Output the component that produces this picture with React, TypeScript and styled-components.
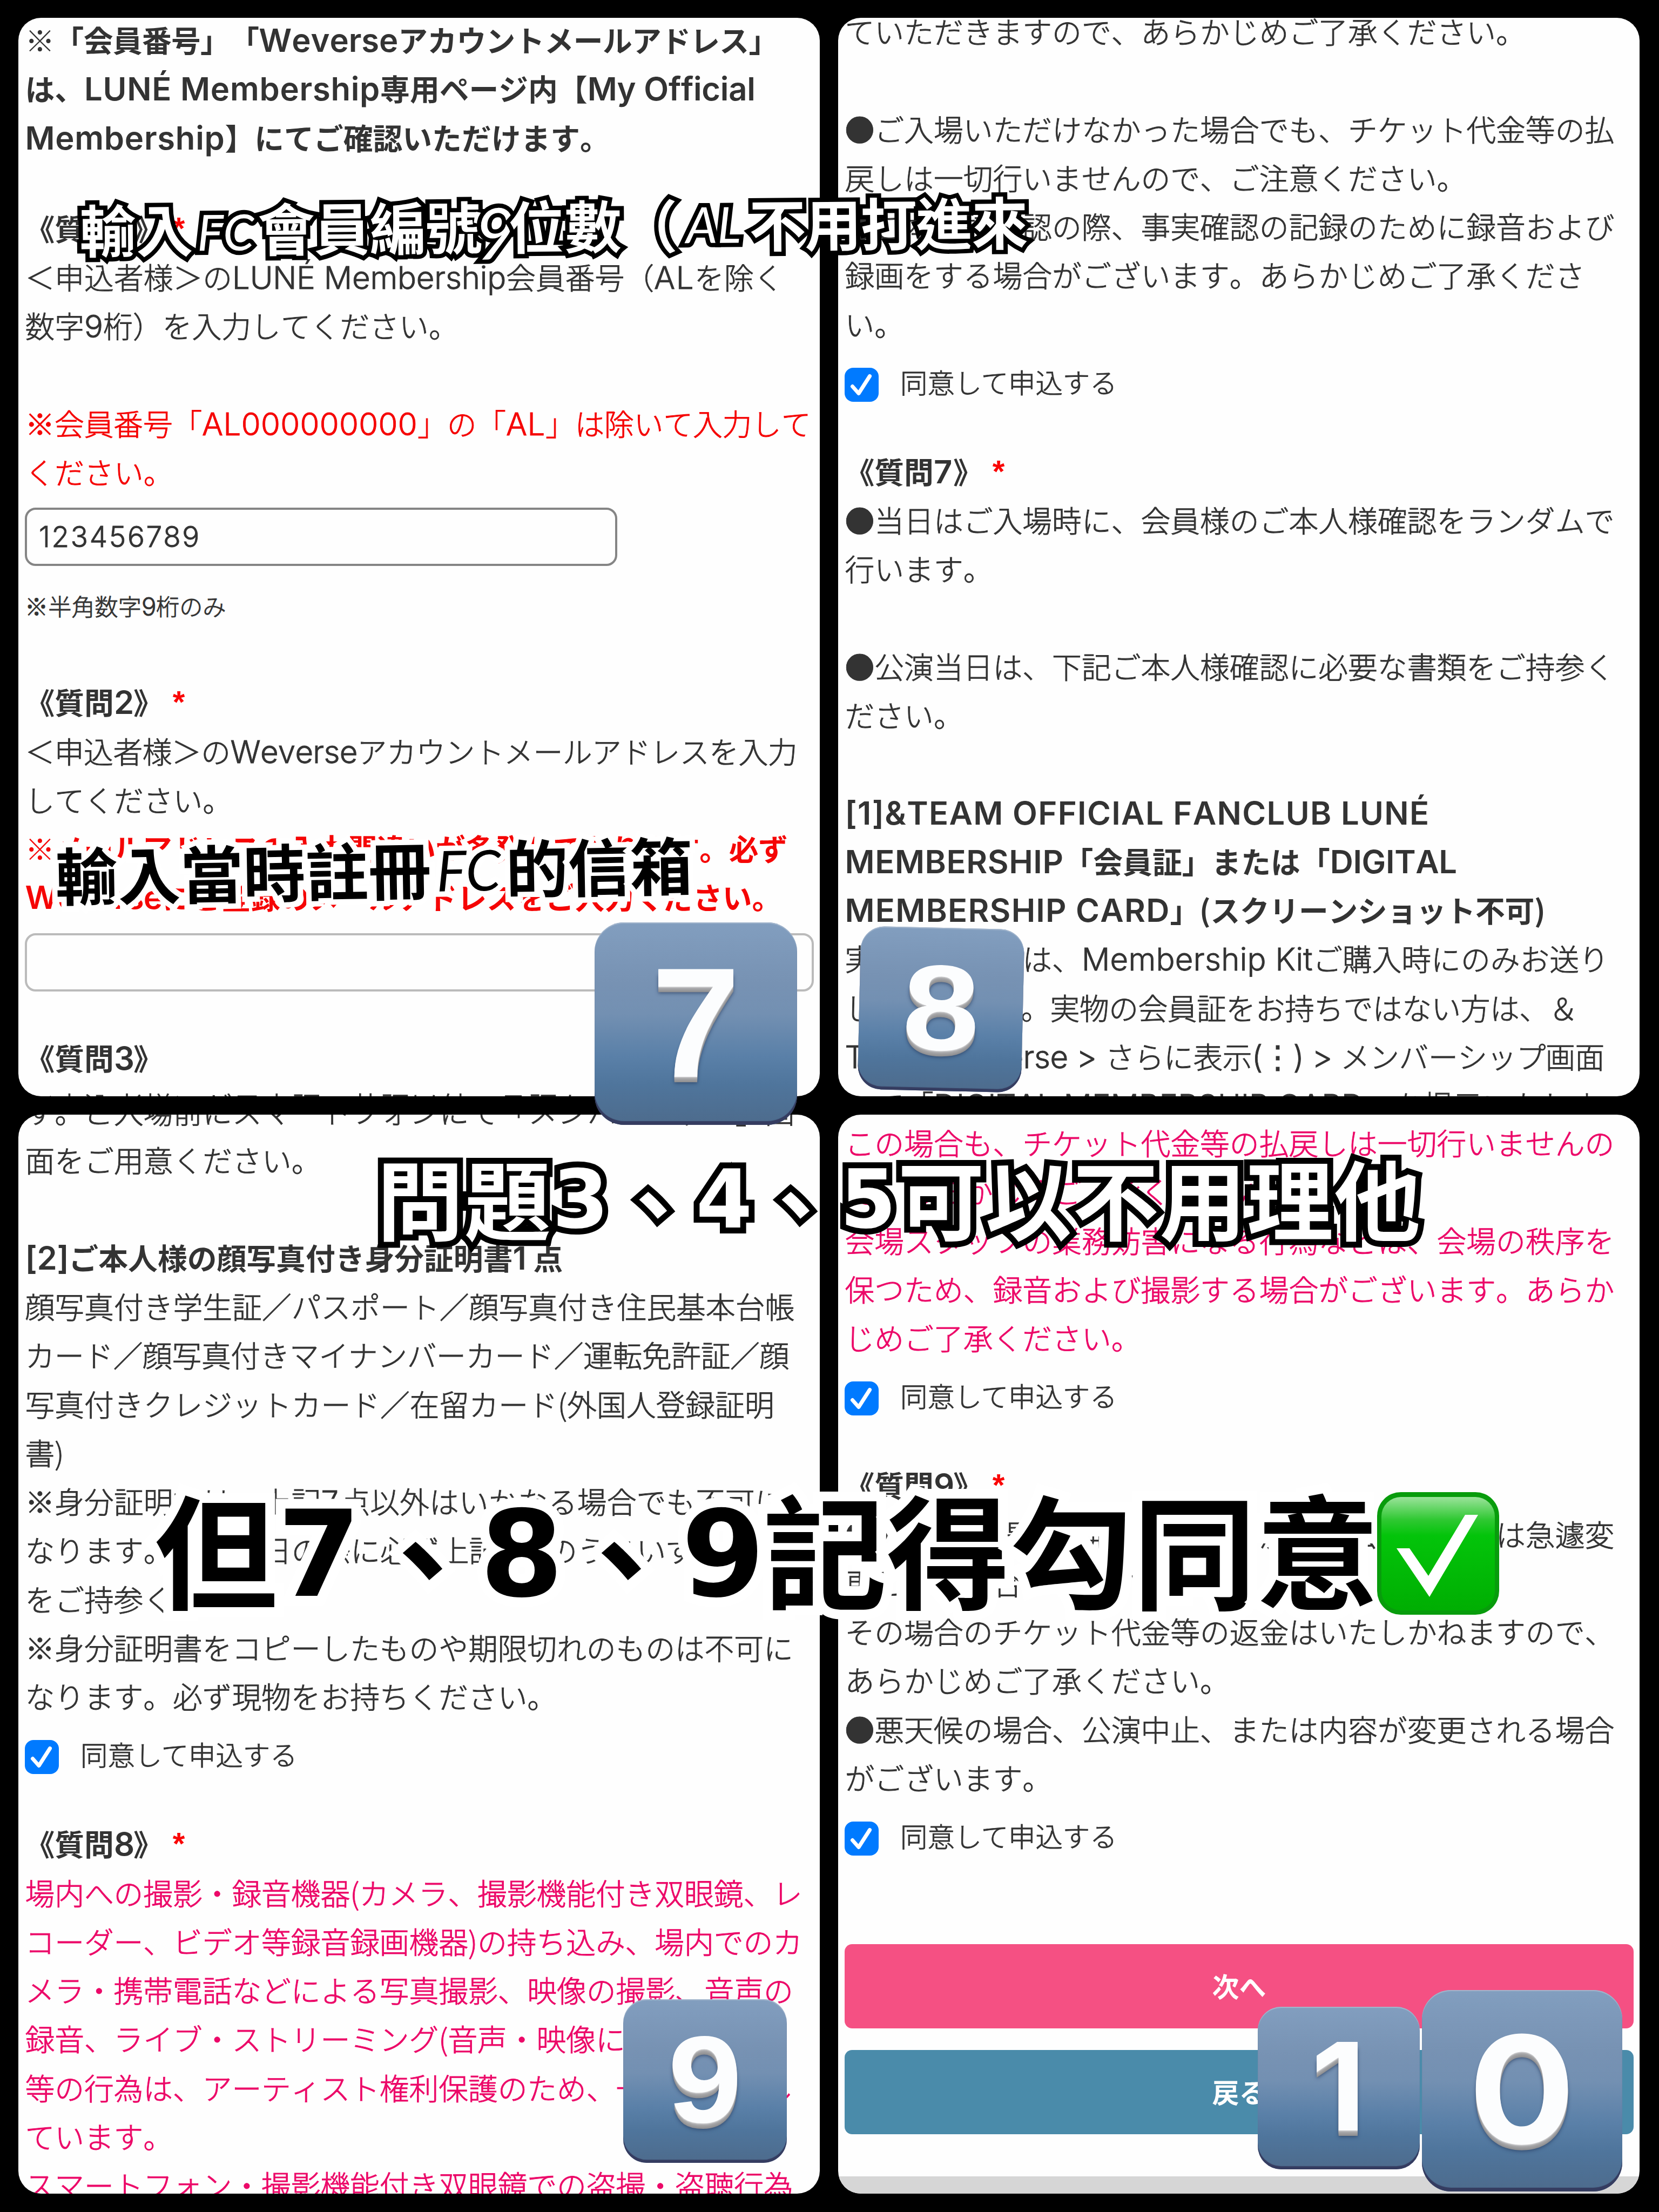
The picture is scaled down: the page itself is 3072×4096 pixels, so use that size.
import React, { useLayoutEffect, useRef } from 'react';
import styled, { createGlobalStyle, css } from 'styled-components';

const JP = `"Noto Sans CJK JP", "Noto Sans", sans-serif`;
const TC = `"Noto Sans CJK TC", "Noto Sans CJK JP", sans-serif`;
const ROW = 90.25;

const GlobalStyle = createGlobalStyle`
  body { margin: 0; background: #000; }
  * { box-sizing: border-box; }
`;

const Board = styled.main`
  position: relative;
  width: 3072px;
  height: 4096px;
  overflow: hidden;
  background: #000;
  display: grid;
  grid-template-columns: 1484px 1484px;
  grid-template-rows: 1997px 1998px;
  gap: 34px;
  padding: 33px 34px;
  font-family: ${JP};
  color: #333;
`;

const Panel = styled.section`
  background: #fefefe;
  border-radius: 42px;
  overflow: hidden;
`;

const Flow = styled.div<{ $shift: number }>`
  display: flex;
  flex-direction: column;
  margin-top: ${(p) => p.$shift}px;
  padding: 0 12px 0 13px;
`;

type Tone = 'ink' | 'red' | 'pink';
const tones: Record<Tone, string> = { ink: '#333', red: '#f50505', pink: '#ec0868' };

const thin = css`
  font-weight: 300;
  -webkit-text-stroke: 0.9px currentColor;
`;

const Line = styled.p<{ $bold?: boolean; $tone?: Tone; $gap?: number; $track?: number }>`
  margin: ${(p) => p.$gap ?? 0}px 0 0 -0.5px;
  height: ${ROW}px;
  line-height: ${ROW - 8}px;
  font-size: 54.8px;
  ${(p) => (p.$bold ? css`font-weight: 700;` : thin)}
  color: ${(p) => tones[p.$tone ?? 'ink']};
  letter-spacing: ${(p) => p.$track ?? 0}px;
  white-space: pre;
  text-spacing-trim: space-all;
  font-kerning: none;
  flex: none;
`;

const Blank = styled.div<{ $h?: number }>`
  height: ${(p) => p.$h ?? ROW}px;
  flex: none;
`;

const Latin = styled.span<{ $bold?: boolean }>`
  font-family: Inter, ${JP};
  font-size: 1.06em;
  line-height: 1;
  white-space: pre;
  ${(p) => p.$bold && css`font-weight: 600; font-size: 1.09em;`}
`;

const Star = styled.span`
  position: relative;
  top: -2px;
  margin-left: 18px;
  font-family: "Liberation Sans", sans-serif;
  font-size: 58px;
  line-height: 1;
  font-weight: 700;
  color: #fa0505;
`;

const Field = styled.div<{ $w: number; $h: number; $gap: number; $edge: string }>`
  margin-top: ${(p) => p.$gap}px;
  width: ${(p) => p.$w}px;
  height: ${(p) => p.$h}px;
  margin-left: -1px;
  padding-left: 22px;
  border: 4px solid ${(p) => p.$edge};
  border-radius: 20px;
  display: flex;
  align-items: center;
  font-size: 50px;
  ${thin}
  flex: none;
`;

const Hint = styled.p`
  margin: 29px 0 0 -1px;
  height: 90px;
  line-height: 88px;
  font-size: 43.2px;
  ${thin}
  white-space: pre;
`;

const AgreeRow = styled.label`
  display: flex;
  align-items: center;
  gap: 40px;
  height: 63px;
  margin: 34px 0 0 -1px;
  font-size: 50.4px;
  line-height: 63px;
  ${thin}
  white-space: nowrap;
  flex: none;
`;

const AgreeText = styled.span`
  margin-top: -12px;
`;

const Box = styled.span`
  width: 63px;
  height: 63px;
  border-radius: 16px;
  background: #007aff;
  display: flex;
  align-items: center;
  justify-content: center;
`;

const Actions = styled.div`
  display: flex;
  flex-direction: column;
  gap: 40px;
  margin: 164px -1px 0;
`;

const Action = styled.button<{ $bg: string }>`
  height: 156px;
  border: 0;
  border-radius: 14px;
  padding: 0 0 4px;
  background: ${(p) => p.$bg};
  color: #fff;
  font-family: ${JP};
  font-size: 50px;
  font-weight: 700;
`;

const Footer = styled.div`
  height: 60px;
  margin-top: 78px;
  background: #d6d6d6;
`;

/* Handwritten notes and keycaps float freely over the collage. */
const Caption = styled.div<{ $x: number; $y: number; $size: number; $tilt?: number; $ink: string; $edge: string; $stroke: number }>`
  position: absolute;
  left: ${(p) => p.$x}px;
  top: ${(p) => p.$y}px;
  display: flex;
  align-items: center;
  height: ${(p) => p.$size * 1.4}px;
  line-height: ${(p) => p.$size * 1.4}px;
  transform: translateY(-50%) rotate(${(p) => p.$tilt ?? 0}deg);
  font-family: ${TC};
  font-size: ${(p) => p.$size}px;
  font-weight: 700;
  white-space: nowrap;
  color: ${(p) => p.$ink};
  -webkit-text-stroke: ${(p) => p.$stroke}px ${(p) => p.$edge};
  paint-order: stroke fill;
  stroke-linejoin: round;
`;

const Glyph = styled.span<{ $w: number; $kind?: 'hand' | 'chunky'; $size?: number; $drop?: number }>`
  width: ${(p) => p.$w}px;
  flex: none;
  display: flex;
  justify-content: center;
  position: relative;
  top: ${(p) => p.$drop ?? 0}px;
  ${(p) => p.$size && css`font-size: ${p.$size}px;`}
  ${(p) => p.$kind === 'hand' && css`font-family: Lato, ${TC}; font-style: italic; font-weight: 400;`}
  ${(p) => p.$kind === 'chunky' && css`font-family: "DejaVu Sans", ${TC};`}
`;

const Key = styled.div<{ $x: number; $y: number; $w: number; $h: number; $tilt?: number }>`
  position: absolute;
  left: ${(p) => p.$x}px;
  top: ${(p) => p.$y}px;
  width: ${(p) => p.$w}px;
  height: ${(p) => p.$h}px;
  padding-bottom: 6px;
  border-radius: ${(p) => p.$w * 0.145}px;
  transform: rotate(${(p) => p.$tilt ?? 0}deg);
  display: flex;
  align-items: center;
  justify-content: center;
  background: linear-gradient(180deg, #829ebf 0%, #7792b3 30%, #7390b2 45%, #5a80a8 66%, #4f759c 80%, #4d6b8c 100%);
  box-shadow: inset 0 ${(p) => p.$w * -0.019}px 1px #353c60, inset 0 2px 1px #a3b6cd;
`;

const KeyDigit = styled.span<{ $size: number; $face?: 'inter' | 'grotesk'; $stretch?: number }>`
  font-family: ${(p) => (p.$face === 'inter' ? 'Inter, ' : '')}"Liberation Sans", Arial, sans-serif;
  font-weight: 700;
  font-size: ${(p) => p.$size}px;
  line-height: 1;
  color: #fcfdfe;
  transform: scaleX(${(p) => p.$stretch ?? 1.08});
  text-shadow: 0 2px 0 #c4c4c6, 0 4px 0 #a9a9ab, 0 6px 0 #a0a0a2, 0 8px 0 #98989a, 0 10px 0 #919193, 0 12px 6px rgba(40, 60, 95, 0.7);
`;

const CheckEmoji = styled.svg`
  position: absolute;
  left: 2549px;
  top: 2762px;
  width: 228px;
  height: 229px;
`;

/* Latin run tracked so that it fills exactly `w` pixels. */
function Fit({ w, bold, children }: { w: number; bold?: boolean; children: string }) {
  const ref = useRef<HTMLSpanElement>(null);
  useLayoutEffect(() => {
    const el = ref.current;
    if (!el) return;
    el.style.letterSpacing = '0px';
    const natural = el.getBoundingClientRect().width;
    el.style.letterSpacing = `${(w - natural) / children.length}px`;
  }, [w, children]);
  return <Latin ref={ref} $bold={bold}>{children}</Latin>;
}

function Question({ n, gap, required = true }: { n: string; gap: number; required?: boolean }) {
  return (
    <Line $bold $gap={gap}>
      《質問<Fit bold w={36}>{n}</Fit>》{required && <Star>*</Star>}
    </Line>
  );
}

function Agree() {
  return (
    <AgreeRow>
      <Box>
        <svg width="45" height="45" viewBox="0 0 45 45" fill="none">
          <path d="M5.5 25.5 L17 38.5 L37.5 6.5" stroke="#fff" strokeWidth="7" strokeLinecap="round" strokeLinejoin="round" />
        </svg>
      </Box>
      <AgreeText>同意して申込する</AgreeText>
    </AgreeRow>
  );
}

function Lines({ rows, tone, track }: { rows: string[]; tone?: Tone; track?: number }) {
  return (
    <>
      {rows.map((r) => (
        <Line key={r} $tone={tone} $track={track}>{r}</Line>
      ))}
    </>
  );
}

function Run({ text, w }: { text: string; w: number }) {
  return (
    <>
      {Array.from(text).map((c, i) => (
        <Glyph key={i} $w={w}>{c}</Glyph>
      ))}
    </>
  );
}

export default function App() {
  return (
    <Board>
      <GlobalStyle />

      <Panel>
        <Flow $shift={-2}>
          <Line $bold $track={-0.7}>※「会員番号」「<Fit bold w={258}>Weverse</Fit>アカウントメールアドレス」</Line>
          <Line $bold>は、<Fit bold w={548}>LUNÉ Membership</Fit>専用ページ内【<Fit bold w={311}>My Official</Fit></Line>
          <Line $bold><Fit bold w={370}>Membership</Fit>】にてご確認いただけます。</Line>
          <Question n="1" gap={78} />
          <Line>＜申込者様＞の<Fit w={507}>LUNÉ Membership</Fit>会員番号（<Fit w={75}>AL</Fit>を除く</Line>
          <Line>数字<Fit w={35}>9</Fit>桁）を入力してください。</Line>
          <Blank />
          <Line $tone="red" $track={-0.2}>※会員番号「<Fit w={399}>AL000000000</Fit>」の「<Fit w={73}>AL</Fit>」は除いて入力して</Line>
          <Line $tone="red">ください。</Line>
          <Field $w={1097} $h={108} $gap={19} $edge="#858585"><Fit w={300}>123456789</Fit></Field>
          <Hint>※半角数字<Fit w={27}>9</Fit>桁のみ</Hint>
          <Question n="2" gap={90} />
          <Line $track={-0.5}>＜申込者様＞の<Fit w={235}>Weverse</Fit>アカウントメールアドレスを入力</Line>
          <Line>してください。</Line>
          <Line $bold $tone="red" $track={-0.5}>※メールアドレスの入力間違いが多発しております。必ず</Line>
          <Line $bold $tone="red" $track={-0.2}><Fit bold w={254}>Weverse</Fit>にご登録のメールアドレスをご入力ください。</Line>
          <Field $w={1461} $h={108} $gap={19} $edge="#bbb" />
          <Question n="3" gap={80} required={false} />
          <Line>＜申込者様＞が日本語、英語以外の言語をご希望の場</Line>
        </Flow>
      </Panel>

      <Panel>
        <Flow $shift={-18}>
          <Line>ていただきますので、あらかじめご了承ください。</Line>
          <Blank />
          <Lines rows={[
            '●ご入場いただけなかった場合でも、チケット代金等の払',
            '戻しは一切行いませんので、ご注意ください。',
            '●ご本人様確認の際、事実確認の記録のために録音および',
            '録画をする場合がございます。あらかじめご了承くださ',
            'い。',
          ]} />
          <Agree />
          <Question n="7" gap={86} />
          <Lines rows={['●当日はご入場時に、会員様のご本人様確認をランダムで', '行います。']} />
          <Blank />
          <Lines rows={['●公演当日は、下記ご本人様確認に必要な書類をご持参く', 'ださい。']} />
          <Blank />
          <Line $bold><Fit bold w={1083}>[1]&amp;TEAM OFFICIAL FANCLUB LUNÉ</Fit></Line>
          <Line $bold><Fit bold w={405}>MEMBERSHIP</Fit>「会員証」または「<Fit bold w={235}>DIGITAL</Fit></Line>
          <Line $bold $track={-0.3}><Fit bold w={602}>MEMBERSHIP CARD</Fit>」(スクリーンショット不可)</Line>
          <Line>実物の会員証は、<Fit w={428}>Membership Kit</Fit>ご購入時にのみお送り</Line>
          <Line $track={-0.5}>しております。実物の会員証をお持ちではない方は、＆</Line>
          <Line $track={-0.5}><Fit w={482}>{'TEAM Weverse > '}</Fit>さらに表示<Fit w={164}>{'(⋮) > '}</Fit>メンバーシップ画面</Line>
          <Line>にて「<Fit w={797}>DIGITAL MEMBERSHIP CARD</Fit>」を掲示いたしま</Line>
        </Flow>
      </Panel>

      <Panel>
        <Flow $shift={-49}>
          <Line>す。ご入場前にスマートフォンにて「メンバーシップ」画</Line>
          <Line>面をご用意ください。</Line>
          <Blank />
          <Line $bold><Fit bold w={81}>[2]</Fit>ご本人様の顔写真付き身分証明書<Fit bold w={38}>1</Fit>点</Line>
          <Line>顔写真付き学生証／パスポート／顔写真付き住民基本台帳</Line>
          <Lines track={-0.4} rows={['カード／顔写真付きマイナンバーカード／運転免許証／顔']} />
          <Lines rows={['写真付きクレジットカード／在留カード(外国人登録証明', '書)']} />
          <Line>※身分証明書は、上記<Fit w={36}>7</Fit>点以外はいかなる場合でも不可に</Line>
          <Line>なります。公演当日の際に必ず上記<Fit w={36}>7</Fit>点のうちいずれか</Line>
          <Lines track={-0.1} rows={['をご持参ください。', '※身分証明書をコピーしたものや期限切れのものは不可に', 'なります。必ず現物をお持ちください。']} />
          <Agree />
          <Question n="8" gap={86} />
          <Lines tone="pink" track={-0.1} rows={[
            '場内への撮影・録音機器(カメラ、撮影機能付き双眼鏡、レ',
            'コーダー、ビデオ等録音録画機器)の持ち込み、場内でのカ',
            'メラ・携帯電話などによる写真撮影、映像の撮影、音声の',
            '録音、ライブ・ストリーミング(音声・映像による配信)',
            '等の行為は、アーティスト権利保護のため、一切禁止とし',
            'ています。',
            'スマートフォン・撮影機能付き双眼鏡での盗撮・盗聴行為',
          ]} />
        </Flow>
      </Panel>

      <Panel>
        <Flow $shift={9}>
          <Lines tone="pink" rows={[
            'この場合も、チケット代金等の払戻しは一切行いませんの',
            'で、あらかじめご了承ください。',
            '会場スタッフの業務妨害になる行為などは、会場の秩序を',
            '保つため、録音および撮影する場合がございます。あらか',
            'じめご了承ください。',
          ]} />
          <Agree />
          <Question n="9" gap={86} />
          <Lines rows={[
            '●公演日時開演、開催場所、出演者、公演内容等は急遽変',
            '更となる場合がございます。',
            'その場合のチケット代金等の返金はいたしかねますので、',
            'あらかじめご了承ください。',
            '●悪天候の場合、公演中止、または内容が変更される場合',
            'がございます。',
          ]} />
          <Agree />
          <Actions>
            <Action $bg="#f55083">次へ</Action>
            <Action $bg="#4a8baa">戻る</Action>
          </Actions>
        </Flow>
        <Footer />
      </Panel>

      <Caption $x={147} $y={415} $size={105} $tilt={-0.5} $ink="#fff" $edge="#000" $stroke={16}>
        <Run text="輸入" w={105} />
        <Glyph $w={121} $kind="hand" $size={92} $drop={8}>FC</Glyph>
        <Run text="會員編號" w={103.5} />
        <Glyph $w={50} $kind="hand" $size={132} $drop={14}>9</Glyph>
        <Run text="位數（" w={104} />
        <Glyph $w={134} $kind="hand" $size={92} $drop={2}>AL</Glyph>
        <Run text="不用打進來" w={103} />
      </Caption>

      <Caption $x={102} $y={1607} $size={116} $tilt={-1} $ink="#000" $edge="#fff" $stroke={20}>
        <Run text="輸入當時註冊" w={116} />
        <Glyph $w={139} $kind="hand" $size={104} $drop={6}>FC</Glyph>
        <Run text="的信箱" w={115} />
      </Caption>

      <Caption $x={697} $y={2215} $size={160} $ink="#fff" $edge="#000" $stroke={22}>
        <Run text="問題" w={162} />
        <Glyph $w={108} $kind="chunky" $size={150} $drop={6}>3</Glyph>
        <Glyph $w={160} $drop={6}>、</Glyph>
        <Glyph $w={104} $kind="chunky" $size={150} $drop={6}>4</Glyph>
        <Glyph $w={160} $drop={6}>、</Glyph>
        <Glyph $w={109} $kind="chunky" $size={150} $drop={6}>5</Glyph>
        <Run text="可以不用理他" w={161.5} />
      </Caption>

      <Caption $x={286} $y={2865} $size={228} $ink="#000" $edge="#fff" $stroke={36}>
        <Glyph $w={228}>但</Glyph>
        <Glyph $w={154} $kind="chunky" $size={222} $drop={14}>7</Glyph>
        <Glyph $w={228} $drop={12}>、</Glyph>
        <Glyph $w={140} $kind="chunky" $size={222} $drop={14}>8</Glyph>
        <Glyph $w={228} $drop={12}>、</Glyph>
        <Glyph $w={150} $kind="chunky" $size={222} $drop={14}>9</Glyph>
        <Run text="記得勾同意" w={228} />
      </Caption>

      <CheckEmoji viewBox="0 0 228 229">
        <defs>
          <linearGradient id="face" x1="0" y1="0" x2="0" y2="1">
            <stop offset="0" stopColor="#9be39b" />
            <stop offset="0.2" stopColor="#2fc832" />
            <stop offset="0.34" stopColor="#03c40a" />
            <stop offset="1" stopColor="#00ae02" />
          </linearGradient>
        </defs>
        <rect x="1" y="1" width="226" height="227" rx="44" fill="#089c0c" />
        <rect x="9" y="10" width="210" height="210" rx="36" fill="url(#face)" />
        <path d="M37 105 L61 105 L96 156 L164 43 L188 43 L98 195 Z" fill="#fff" />
      </CheckEmoji>

      <Key $x={1101} $y={1708} $w={375} $h={375}><KeyDigit $size={290} $stretch={1.02}>7</KeyDigit></Key>
      <Key $x={1591} $y={1718} $w={303} $h={302} $tilt={1.3}><KeyDigit $size={225} $stretch={1.14}>8</KeyDigit></Key>
      <Key $x={1154} $y={3702} $w={303} $h={303}><KeyDigit $size={228}>9</KeyDigit></Key>
      <Key $x={2329} $y={3716} $w={300} $h={301}><KeyDigit $size={225} $face="inter" $stretch={1.05}>1</KeyDigit></Key>
      <Key $x={2633} $y={3685} $w={371} $h={373}><KeyDigit $size={276} $face="inter" $stretch={1.06}>0</KeyDigit></Key>
    </Board>
  );
}
